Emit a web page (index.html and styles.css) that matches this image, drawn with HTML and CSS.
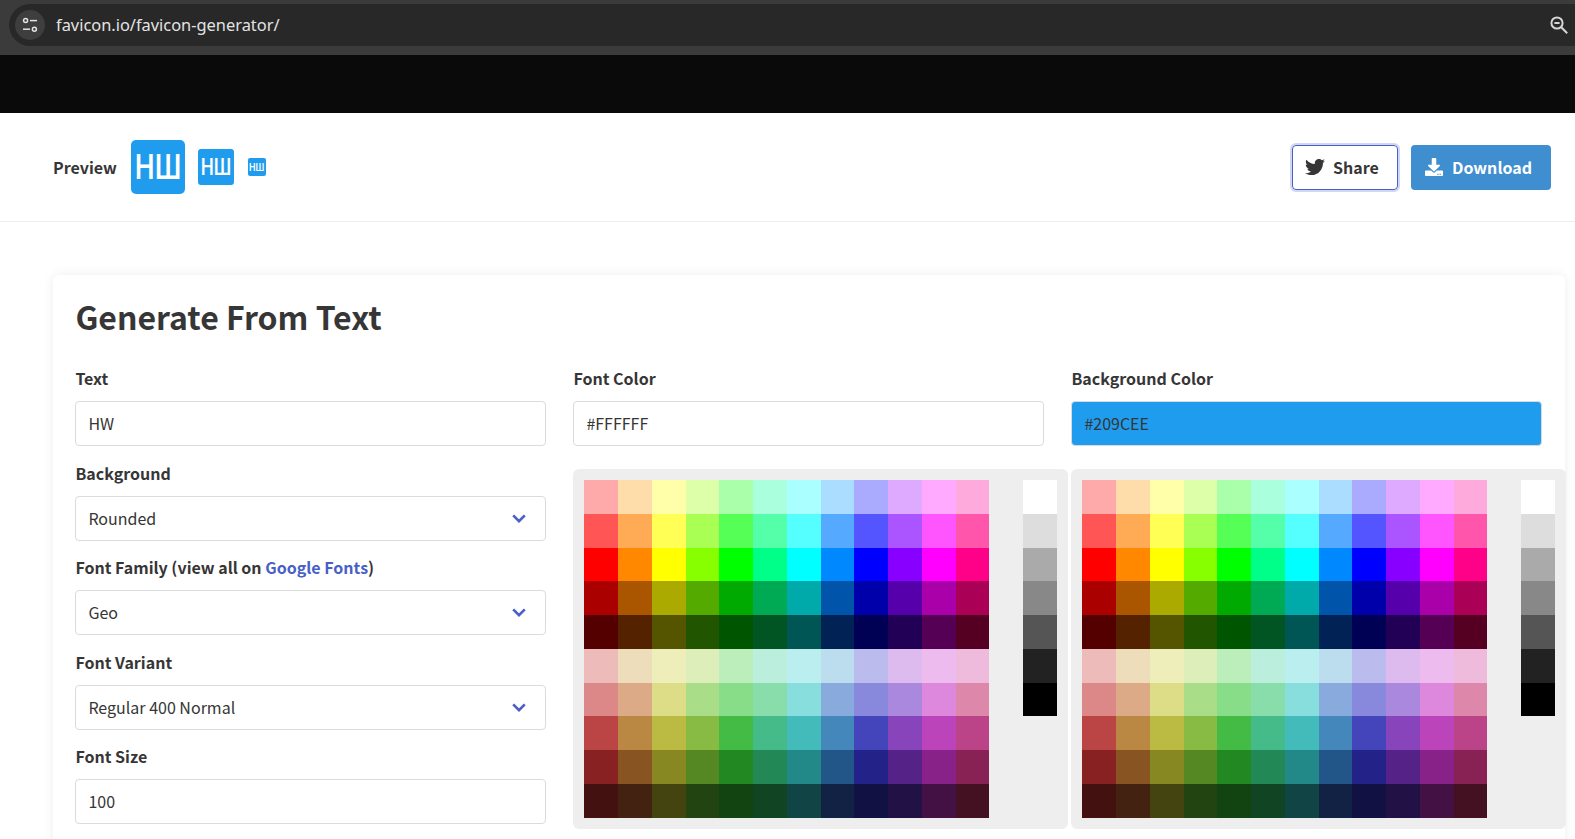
FILE: index.html
```html
<!DOCTYPE html>
<html lang="en">

<head>
    <meta charset="utf-8">
    <title>Favicon Generator</title>
    <link rel="stylesheet" href="styles.css">
</head>

<body>
    <!-- Browser toolbar -->
    <div class="toolbar">
        <div class="address-bar">
            <span class="site-info">
                <svg viewBox="0 0 16 16" width="16" height="16" fill="none" stroke="#e3e3e3" stroke-width="1.5">
                    <circle cx="3.6" cy="3.6" r="2"/>
                    <path d="M8 3.6h7"/>
                    <circle cx="12.4" cy="12.2" r="2"/>
                    <path d="M1 12.2h7"/>
                </svg>
            </span>
            <span class="url">favicon.io/favicon-generator/</span>
            <svg class="zoom-icon" viewBox="0 0 18 18" width="18" height="18" fill="none" stroke="#d6d6d6" stroke-width="2">
                <circle cx="7" cy="7" r="5.6"/>
                <path d="M4.4 7h5.2"/>
                <path d="M11 11l6.2 6.2"/>
            </svg>
        </div>
    </div>
    <div class="black-band"></div>

    <header class="preview-bar">
        <div class="preview">
            <strong class="preview-label">Preview</strong>
            <span class="favicon favicon-lg"><span>НШ</span></span>
            <span class="favicon favicon-md"><span>НШ</span></span>
            <span class="favicon favicon-sm"><span>НШ</span></span>
        </div>
        <div class="actions">
            <a class="button button-share" href="#">
                <svg viewBox="0 0 512 512" width="20" height="20" fill="#363636"><path d="M459.37 151.716c.325 4.548.325 9.097.325 13.645 0 138.72-105.583 298.558-298.558 298.558-59.452 0-114.68-17.219-161.137-47.106 8.447.974 16.568 1.299 25.34 1.299 49.055 0 94.213-16.568 130.274-44.832-46.132-.975-84.792-31.188-98.112-72.772 6.498.974 12.995 1.624 19.818 1.624 9.421 0 18.843-1.3 27.614-3.573-48.081-9.747-84.143-51.98-84.143-102.985v-1.299c13.969 7.797 30.214 12.67 47.431 13.319-28.264-18.843-46.781-51.005-46.781-87.391 0-19.492 5.197-37.36 14.294-52.954 51.655 63.675 129.3 105.258 216.365 109.807-1.624-7.797-2.599-15.918-2.599-24.04 0-57.828 46.782-104.934 104.934-104.934 30.213 0 57.502 12.67 76.67 33.137 23.715-4.548 46.456-13.645 66.599-25.665-7.798 24.366-24.366 44.833-46.132 57.827 21.117-2.273 41.584-8.122 60.426-16.243-14.292 20.791-32.161 39.308-52.628 54.253z"/></svg>
                Share
            </a>
            <a class="button button-download" href="#">
                <svg viewBox="0 0 512 512" width="18" height="18" fill="#fff"><path d="M216 0h80c13.3 0 24 10.7 24 24v168h87.7c17.8 0 26.7 21.5 14.1 34.1L269.7 378.3c-7.5 7.5-19.8 7.5-27.3 0L90.1 226.1c-12.6-12.6-3.7-34.1 14.1-34.1H192V24c0-13.3 10.7-24 24-24zm296 376v112c0 13.3-10.7 24-24 24H24c-13.3 0-24-10.7-24-24V376c0-13.3 10.7-24 24-24h146.7l49 49c20.1 20.1 52.5 20.1 72.6 0l49-49H488c13.3 0 24 10.7 24 24zm-124 88c0-11-9-20-20-20s-20 9-20 20 9 20 20 20 20-9 20-20zm64 0c0-11-9-20-20-20s-20 9-20 20 9 20 20 20 20-9 20-20z"/></svg>
                Download
            </a>
        </div>
    </header>

    <main class="content">
        <section class="card">
            <h2 class="card-title">Generate From Text</h2>
            <form class="columns">
                <div class="column">
                    <div class="field">
                        <label class="label" for="text">Text</label>
                        <input class="input" type="text" id="text" value="HW">
                    </div>
                    <div class="field">
                        <label class="label" for="background">Background</label>
                        <div class="select-wrap">
                            <select class="input" id="background">
                                <option>Rounded</option>
                            </select>
                            <svg class="chevron" viewBox="0 0 14 9" width="14" height="9"><path d="M1.2 1.4L7 7.2l5.8-5.8"/></svg>
                        </div>
                    </div>
                    <div class="field">
                        <label class="label" for="family">Font Family (view all on <a href="#">Google Fonts</a>)</label>
                        <div class="select-wrap">
                            <select class="input" id="family">
                                <option>Geo</option>
                            </select>
                            <svg class="chevron" viewBox="0 0 14 9" width="14" height="9"><path d="M1.2 1.4L7 7.2l5.8-5.8"/></svg>
                        </div>
                    </div>
                    <div class="field">
                        <label class="label" for="variant">Font Variant</label>
                        <div class="select-wrap">
                            <select class="input" id="variant">
                                <option>Regular 400 Normal</option>
                            </select>
                            <svg class="chevron" viewBox="0 0 14 9" width="14" height="9"><path d="M1.2 1.4L7 7.2l5.8-5.8"/></svg>
                        </div>
                    </div>
                    <div class="field">
                        <label class="label" for="size">Font Size</label>
                        <input class="input" type="text" id="size" value="100">
                    </div>
                </div>

                <div class="column">
                    <div class="field">
                        <label class="label" for="font-color">Font Color</label>
                        <input class="input" type="text" id="font-color" value="#FFFFFF">
                    </div>
                    <div class="palette"></div>
                </div>

                <div class="column">
                    <div class="field">
                        <label class="label" for="bg-color">Background Color</label>
                        <input class="input input-blue" type="text" id="bg-color" value="#209CEE">
                    </div>
                    <div class="palette"></div>
                </div>
            </form>
        </section>
    </main>

    <script src="palette.js"></script>
</body>

</html>
```

FILE: styles.css
```css
html,
body {
    height: 839px;
    margin: 0;
    overflow: hidden;
}

body {
    background-color: #fff;
    color: #363636;
    font-family: 'Noto Sans CJK SC', 'Noto Sans', sans-serif;
    font-size: 16px;
}

/* Browser toolbar */
.toolbar {
    height: 55px;
    box-sizing: border-box;
    padding: 4px 0 9px 9px;
    background-color: #3b3b3b;
}

.address-bar {
    display: flex;
    align-items: center;
    height: 42px;
    padding: 0 7px 0 6px;
    border-radius: 21px 0 0 21px;
    background-color: #282828;
}

.site-info {
    display: flex;
    align-items: center;
    justify-content: center;
    width: 30px;
    height: 30px;
    border-radius: 50%;
    background-color: #3e3e3e;
}

.url {
    flex: 1;
    margin-left: 11px;
    padding-bottom: 2px;
    color: #e3e3e3;
    font-family: 'Noto Sans', sans-serif;
    font-size: 16.4px;
}

.black-band {
    height: 58px;
    background-color: #0a0a0a;
}

/* Preview bar */
.preview-bar {
    display: flex;
    align-items: center;
    justify-content: space-between;
    height: 109px;
    box-sizing: border-box;
    padding: 0 24px 0 53px;
    border-bottom: 1px solid #ededed;
}

.preview {
    display: flex;
    align-items: center;
}

.preview-label {
    margin-right: 14px;
}

.favicon {
    display: flex;
    align-items: center;
    justify-content: center;
    overflow: hidden;
    background-color: #209cee;
    color: #fff;
    font-family: Roboto, sans-serif;
    font-weight: 500;
}

.favicon span {
    transform: scaleX(.8);
}

.favicon-lg {
    width: 54px;
    height: 54px;
    margin-right: 13px;
    border-radius: 5px;
    font-size: 35px;
}

.favicon-md {
    width: 36px;
    height: 36px;
    margin-right: 14px;
    border-radius: 3px;
    font-size: 23px;
}

.favicon-sm {
    width: 18px;
    height: 18px;
    border-radius: 2px;
    font-size: 11.5px;
}

.actions {
    display: flex;
    gap: 13px;
}

.button {
    display: flex;
    align-items: center;
    height: 45px;
    box-sizing: border-box;
    border-radius: 4px;
    font-weight: 700;
    text-decoration: none;
}

.button-share {
    gap: 8px;
    width: 106px;
    padding-left: 12px;
    border: 1px solid #485fc7;
    box-shadow: 0 0 0 2px rgba(72, 95, 199, .25);
    color: #363636;
}

.button-download {
    gap: 9px;
    width: 140px;
    padding-left: 14px;
    background-color: #3e8ed0;
    color: #fff;
}

/* Form card */
.content {
    padding: 53px 10px 0 52.8px;
}

.card {
    height: 700px;
    box-sizing: border-box;
    padding: 18px 24px 0 22.6px;
    border-radius: 6px;
    box-shadow: 0 0 12px rgba(10, 10, 10, .07);
}

.card-title {
    margin: 0 0 26px;
    font-size: 32px;
    font-weight: 700;
    line-height: 46px;
}

.columns {
    display: grid;
    grid-template-columns: repeat(3, 471px);
    gap: 27px;
    align-items: start;
}

.field {
    margin-bottom: 13px;
}

.field:nth-child(odd) {
    margin-bottom: 14px;
}

.label {
    display: block;
    margin-bottom: 9px;
    font-weight: 700;
    line-height: 27px;
}

.label a {
    color: #485fc7;
    text-decoration: none;
}

.input {
    display: block;
    width: 100%;
    height: 45px;
    box-sizing: border-box;
    padding: 0 12px 2px;
    border: 1px solid #dbdbdb;
    border-radius: 4px;
    appearance: none;
    background-color: #fff;
    color: #363636;
    font-family: inherit;
    font-size: 16px;
}

.input-blue {
    background-color: #209cee;
}

.select-wrap {
    position: relative;
}

.chevron {
    position: absolute;
    top: 18px;
    right: 20px;
    fill: none;
    stroke: #485fc7;
    stroke-width: 2.6;
}

/* Colour picker panel, a little wider than its column */
.palette {
    display: flex;
    justify-content: space-between;
    width: 495px;
    box-sizing: border-box;
    margin-top: 23px;
    padding: 11px;
    border-radius: 6px;
    background-color: #eee;
}

.swatches {
    display: grid;
    grid-template-columns: repeat(12, 33.75px);
    grid-auto-rows: 33.75px;
}

.grays {
    display: grid;
    grid-template-columns: 34px;
    grid-auto-rows: 33.75px;
    align-self: flex-start;
}
```

FILE: palette.js
```js
// Colours of the picker, one row per line
var swatchRows = [
    ['#faa', '#fda', '#ffa', '#dfa', '#afa', '#afd', '#aff', '#adf', '#aaf', '#daf', '#faf', '#fad'],
    ['#f55', '#fa5', '#ff5', '#af5', '#5f5', '#5fa', '#5ff', '#5af', '#55f', '#a5f', '#f5f', '#f5a'],
    ['#f00', '#f80', '#ff0', '#8f0', '#0f0', '#0f8', '#0ff', '#08f', '#00f', '#80f', '#f0f', '#f08'],
    ['#a00', '#a50', '#aa0', '#5a0', '#0a0', '#0a5', '#0aa', '#05a', '#00a', '#50a', '#a0a', '#a05'],
    ['#500', '#520', '#550', '#250', '#050', '#052', '#055', '#025', '#005', '#205', '#505', '#502'],
    ['#ebb', '#edb', '#eeb', '#deb', '#beb', '#bed', '#bee', '#bde', '#bbe', '#dbe', '#ebe', '#ebd'],
    ['#d88', '#da8', '#dd8', '#ad8', '#8d8', '#8da', '#8dd', '#8ad', '#88d', '#a8d', '#d8d', '#d8a'],
    ['#b44', '#b84', '#bb4', '#8b4', '#4b4', '#4b8', '#4bb', '#48b', '#44b', '#84b', '#b4b', '#b48'],
    ['#822', '#852', '#882', '#582', '#282', '#285', '#288', '#258', '#228', '#528', '#828', '#825'],
    ['#411', '#421', '#441', '#241', '#141', '#142', '#144', '#124', '#114', '#214', '#414', '#412']
];
var grayRow = ['#fff', '#ddd', '#aaa', '#888', '#555', '#222', '#000'];

function addCells(parent, colors) {
    colors.forEach(function(color) {
        var cell = document.createElement('span');
        cell.style.backgroundColor = color;
        parent.appendChild(cell);
    });
}

document.querySelectorAll('.palette').forEach(function(palette) {
    var swatches = document.createElement('div');
    swatches.className = 'swatches';
    swatchRows.forEach(function(row) {
        addCells(swatches, row);
    });

    var grays = document.createElement('div');
    grays.className = 'grays';
    addCells(grays, grayRow);

    palette.appendChild(swatches);
    palette.appendChild(grays);
});
```
